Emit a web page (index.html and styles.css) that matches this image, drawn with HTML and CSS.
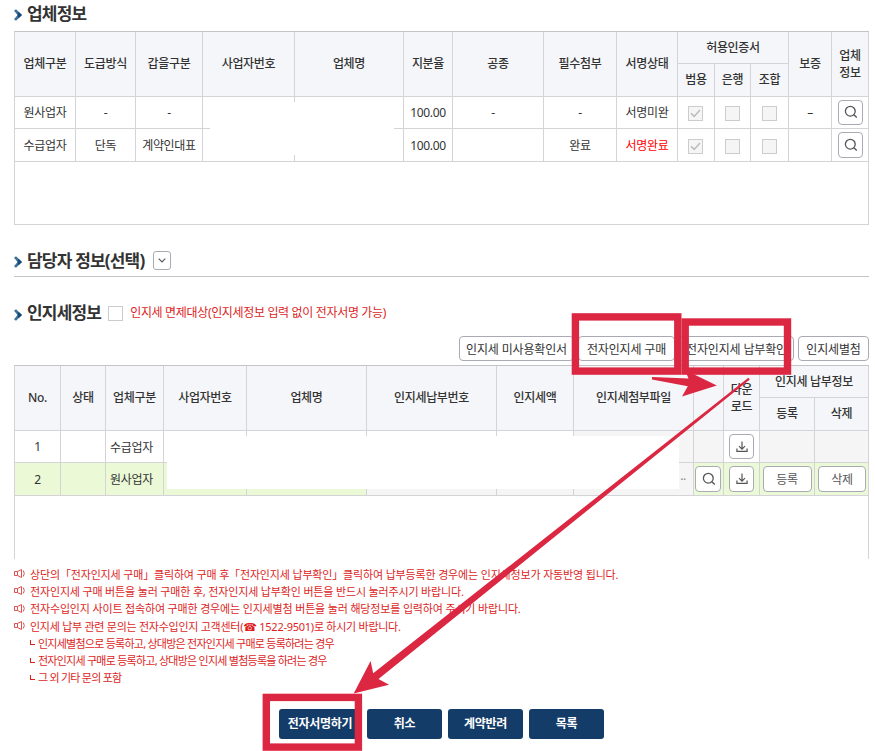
FILE: index.html
```html
<!DOCTYPE html>
<html lang="ko">
<head>
    <meta charset="UTF-8">
    <meta name="viewport" content="width=device-width, initial-scale=1.0">
    <title>전자계약 서명</title>
    <link rel="stylesheet" href="styles.css">
</head>
<body>
    <!-- 공통 아이콘 -->
    <svg class="sprite">
        <symbol id="arrow" viewBox="0 0 8 12">
            <path d="M0 1.8 L2 .3 L8 6 L2 11.7 L0 10.2 L3.6 6 Z" fill="#3d7199"/>
            <path d="M4.5 2.8 L8 6 L4.5 9.2 L3.6 6 Z" fill="#174a78"/>
        </symbol>
        <symbol id="search" viewBox="0 0 14 14">
            <circle cx="6.3" cy="6.2" r="4.9" fill="none" stroke="#555" stroke-width="1.3"/>
            <path d="M9.8 9.8 L12.8 12.6" fill="none" stroke="#555" stroke-width="1.4"/>
        </symbol>
        <symbol id="download" viewBox="0 0 12 12">
            <path d="M6 .5 V8 M3 5.2 L6 8.2 L9 5.2 M.9 7.6 V10.4 H11.1 V7.6" fill="none" stroke="#555" stroke-width="1.2"/>
        </symbol>
        <symbol id="check" viewBox="0 0 11 9">
            <path d="M1 4.2 L4.2 7.4 L10 1" fill="none" stroke="#bbb" stroke-width="1.5"/>
        </symbol>
        <symbol id="speaker" viewBox="0 0 12 9">
            <path d="M.5 2.5 H3.5 V6.5 H.5 Z M3.5 2.5 L7.5 .5 V8.5 L3.5 6.5 M9.3 1.5 Q11.3 4.5 9.3 7.5" fill="none" stroke="#e05050" stroke-width="1"/>
        </symbol>
    </svg>

    <div class="page">
        <h2 class="title title-company"><svg class="bullet"><use href="#arrow"/></svg>업체정보</h2>
        <div class="grid-box company">
            <table>
                <colgroup>
                    <col class="w61"><col class="w60"><col class="w67"><col class="w92"><col class="w109"><col class="w49"><col class="w91">
                    <col class="w73"><col class="w61"><col class="w37"><col class="w36"><col class="w38"><col class="w43"><col class="w37">
                </colgroup>
                <thead>
                    <tr class="odd">
                        <th rowspan="2">업체구분</th>
                        <th rowspan="2">도급방식</th>
                        <th rowspan="2">갑을구분</th>
                        <th rowspan="2">사업자번호</th>
                        <th rowspan="2">업체명</th>
                        <th rowspan="2">지분율</th>
                        <th rowspan="2">공종</th>
                        <th rowspan="2">필수첨부</th>
                        <th rowspan="2">서명상태</th>
                        <th colspan="3" class="low">허용인증서</th>
                        <th rowspan="2">보증</th>
                        <th rowspan="2" class="low">업체<br>정보</th>
                    </tr>
                    <tr class="even">
                        <th>범용</th>
                        <th>은행</th>
                        <th>조합</th>
                    </tr>
                </thead>
                <tbody>
                    <tr class="odd">
                        <td>원사업자</td>
                        <td>-</td>
                        <td>-</td>
                        <td></td>
                        <td></td>
                        <td>100.00</td>
                        <td class="work">-</td>
                        <td>-</td>
                        <td>서명미완</td>
                        <td><span class="check checked"><svg><use href="#check"/></svg></span></td>
                        <td><span class="check"></span></td>
                        <td><span class="check"></span></td>
                        <td>–</td>
                        <td><button class="icon-btn"><svg class="ico-search"><use href="#search"/></svg></button></td>
                    </tr>
                    <tr class="even">
                        <td>수급업자</td>
                        <td>단독</td>
                        <td>계약인대표</td>
                        <td></td>
                        <td></td>
                        <td>100.00</td>
                        <td></td>
                        <td>완료</td>
                        <td class="done">서명완료</td>
                        <td><span class="check checked"><svg><use href="#check"/></svg></span></td>
                        <td><span class="check"></span></td>
                        <td><span class="check"></span></td>
                        <td></td>
                        <td><button class="icon-btn tall"><svg class="ico-search"><use href="#search"/></svg></button></td>
                    </tr>
                </tbody>
            </table>
            <div class="mask"></div>
        </div>

        <h2 class="title title-manager"><svg class="bullet"><use href="#arrow"/></svg>담당자 정보(선택)
            <button class="toggle"><svg viewBox="0 0 8 5"><path d="M.7 .7 L4 4 L7.3 .7" fill="none" stroke="#555" stroke-width="1.1"/></svg></button>
        </h2>

        <div class="stamp-head">
            <h2 class="title"><svg class="bullet"><use href="#arrow"/></svg>인지세정보</h2>
            <span class="check empty"></span>
            <span class="exempt">인지세 면제대상(인지세정보 입력 없이 전자서명 가능)</span>
        </div>

        <div class="toolbar">
            <button class="btn b1">인지세 미사용확인서</button>
            <button class="btn b2">전자인지세 구매</button>
            <button class="btn b3">전자인지세 납부확인</button>
            <button class="btn b4">인지세별첨</button>
        </div>

        <div class="grid-box stamp">
            <table>
                <colgroup>
                    <col class="w46"><col class="w45"><col class="w58"><col class="w83"><col class="w120"><col class="w130">
                    <col class="w77"><col class="w120"><col class="w30"><col class="w36"><col class="w55"><col class="w54">
                </colgroup>
                <thead>
                    <tr class="odd">
                        <th rowspan="2">No.</th>
                        <th rowspan="2">상태</th>
                        <th rowspan="2">업체구분</th>
                        <th rowspan="2">사업자번호</th>
                        <th rowspan="2">업체명</th>
                        <th rowspan="2">인지세납부번호</th>
                        <th rowspan="2">인지세액</th>
                        <th rowspan="2">인지세첨부파일</th>
                        <th rowspan="2"></th>
                        <th rowspan="2" class="low">다운<br>로드</th>
                        <th colspan="2" class="low">인지세 납부정보</th>
                    </tr>
                    <tr class="even">
                        <th>등록</th>
                        <th>삭제</th>
                    </tr>
                </thead>
                <tbody>
                    <tr class="odd">
                        <td>1</td>
                        <td></td>
                        <td class="left">수급업자</td>
                        <td></td>
                        <td></td>
                        <td></td>
                        <td></td>
                        <td class="off"></td>
                        <td class="off"></td>
                        <td><button class="icon-btn"><svg class="ico-down"><use href="#download"/></svg></button></td>
                        <td class="off"></td>
                        <td class="off"></td>
                    </tr>
                    <tr class="even selected">
                        <td>2</td>
                        <td></td>
                        <td class="left">원사업자</td>
                        <td></td>
                        <td></td>
                        <td class="off"></td>
                        <td class="off"></td>
                        <td class="off more">··</td>
                        <td><button class="icon-btn tall wide"><svg class="ico-search"><use href="#search"/></svg></button></td>
                        <td><button class="icon-btn tall"><svg class="ico-down"><use href="#download"/></svg></button></td>
                        <td><button class="cell-btn">등록</button></td>
                        <td><button class="cell-btn del">삭제</button></td>
                    </tr>
                </tbody>
            </table>
            <div class="mask"></div>
        </div>

        <ul class="notes">
            <li><svg class="speaker"><use href="#speaker"/></svg><span>상단의「전자인지세 구매」클릭하여 구매 후「전자인지세 납부확인」클릭하여 납부등록한 경우에는 인지세정보가 자동반영 됩니다.</span></li>
            <li><svg class="speaker"><use href="#speaker"/></svg><span>전자인지세 구매 버튼을 눌러 구매한 후, 전자인지세 납부확인 버튼을 반드시 눌러주시기 바랍니다.</span></li>
            <li><svg class="speaker"><use href="#speaker"/></svg><span>전자수입인지 사이트 접속하여 구매한 경우에는 인지세별첨 버튼을 눌러 해당정보를 입력하여 주시기 바랍니다.</span></li>
            <li class="contact"><svg class="speaker"><use href="#speaker"/></svg><span>인지세 납부 관련 문의는 전자수입인지 고객센터(<b class="tel">☎</b> 1522-9501)로 하시기 바랍니다.</span></li>
            <li class="sub"><i class="corner"></i>인지세별첨으로 등록하고, 상대방은 전자인지세 구매로 등록하려는 경우</li>
            <li class="sub"><i class="corner"></i>전자인지세 구매로 등록하고, 상대방은 인지세 별첨등록을 하려는 경우</li>
            <li class="sub"><i class="corner"></i>그 외 기타 문의 포함</li>
        </ul>

        <div class="actions">
            <button class="sign">전자서명하기</button>
            <button>취소</button>
            <button>계약반려</button>
            <button>목록</button>
        </div>

        <!-- 순서 안내 표시 -->
        <svg class="guide" viewBox="0 0 875 751">
            <g fill="none" stroke="#dc2742" stroke-width="7.4">
                <rect x="575.4" y="316.9" width="102.4" height="54.2"/>
                <rect x="685.2" y="322" width="102.3" height="49.1"/>
                <rect x="266.3" y="697.4" width="92.1" height="49.7"/>
            </g>
            <g fill="#dc2742">
                <path d="M652 377 L688.5 378.5 L685 370 L716.8 385.4 L682 396.4 L687.8 386.2 L652 379.6 Z"/>
                <path d="M748.4 377.8 L749.8 379.4 L378.5 679 L389 684.7 L353.7 693.6 L370.6 661 L373.2 673.3 Z"/>
            </g>
        </svg>
    </div>
</body>
</html>
```
FILE: styles.css
```css
* {
    box-sizing: border-box;
}

body {
    margin: 0;
    background: #fff;
    color: #333;
    font-family: "Noto Sans", "Noto Sans CJK KR", sans-serif;
    font-size: 12px;
    letter-spacing: -0.3px;
}

button {
    margin: 0;
    padding: 0;
    font-family: inherit;
    font-size: 12px;
    letter-spacing: inherit;
    color: #333;
    background: #fff;
    cursor: pointer;
}

.sprite {
    display: none;
}

.page {
    position: relative;
    height: 751px;
    padding: 0 6px 0 14px;
    overflow: hidden;
}

/* titles */
.title {
    display: flex;
    align-items: center;
    margin: 0;
    font-size: 17px;
    font-weight: 700;
    letter-spacing: -0.8px;
    line-height: 26px;
}

.bullet {
    width: 8px;
    height: 12px;
    margin: 3px 5px 0 0;
}

.title-company {
    height: 31px;
    padding-bottom: 4px;
}

.title-manager {
    height: 52px;
    padding-top: 20px;
    border-bottom: 1px solid #c4c4c8;
}

.title-manager .bullet {
    margin-top: 2px;
}

.toggle {
    display: flex;
    align-items: center;
    justify-content: center;
    width: 18px;
    height: 19px;
    margin: 0 0 1px 9px;
    border: 1px solid #aaaab4;
    border-radius: 3px;
}

.toggle svg {
    width: 8px;
    height: 5px;
}

/* tables */
.grid-box {
    position: relative;
    width: 855px;
    border: 1px solid #d3d3d8;
    border-top-color: #c4c4c8;
    border-right: 0;
}

.grid-box::after {
    content: "";
    position: absolute;
    top: 0;
    right: 0;
    bottom: 0;
    width: 1px;
    background: #d3d3d8;
}

.company {
    height: 194px;
}

.stamp {
    height: 194px;
    border-bottom: 0;
}

table {
    width: 854px;
    table-layout: fixed;
    border-collapse: separate;
    border-spacing: 0;
}

th, td {
    padding: 0;
    border-right: 1px solid #d3d3d8;
    border-bottom: 1px solid #d3d3d8;
    text-align: center;
    font-weight: normal;
    line-height: 17px;
    white-space: nowrap;
}

th {
    padding-bottom: 2px;
    background: #f5f6f9;
    font-weight: 500;
}

th.low {
    padding-bottom: 0;
}

.odd {
    height: 32px;
}

.even {
    height: 33px;
}

.w30 { width: 30px; }
.w36 { width: 36px; }
.w37 { width: 37px; }
.w38 { width: 38px; }
.w43 { width: 43px; }
.w45 { width: 45px; }
.w46 { width: 46px; }
.w49 { width: 49px; }
.w54 { width: 54px; }
.w55 { width: 55px; }
.w58 { width: 58px; }
.w60 { width: 60px; }
.w61 { width: 61px; }
.w67 { width: 67px; }
.w73 { width: 73px; }
.w77 { width: 77px; }
.w83 { width: 83px; }
.w91 { width: 91px; }
.w92 { width: 92px; }
.w109 { width: 109px; }
.w120 { width: 120px; }
.w130 { width: 130px; }

.left {
    padding-left: 4px;
    text-align: left;
}

.stamp .odd .left {
    padding-top: 1px;
}

.work {
    padding-right: 10px;
}

.done {
    color: #f00;
}

.selected td {
    background: #ebf9d7;
}

td.off, .selected td.off {
    background: #f5f5f5;
}

.more {
    padding-right: 7px;
    text-align: right;
    color: #888;
}

.check {
    display: flex;
    align-items: center;
    justify-content: center;
    width: 15px;
    height: 15px;
    margin: 2px auto 0;
    border: 1px solid #ccc;
    background: #f5f5f5;
}

.check.checked {
    margin-left: 10px;
}

.check svg {
    width: 11px;
    height: 9px;
}

.icon-btn {
    display: flex;
    align-items: center;
    justify-content: center;
    width: 25px;
    height: 25px;
    margin: 0 auto;
    border: 1px solid #aaaab4;
    border-radius: 4px;
}

.icon-btn.tall {
    height: 26px;
}

.icon-btn.wide {
    width: 26px;
    margin-left: 1px;
}

.ico-search {
    width: 14px;
    height: 14px;
    margin: 0 0 1px 1px;
}

.ico-down {
    width: 12px;
    height: 12px;
}

.cell-btn {
    display: block;
    width: 49px;
    height: 26px;
    margin: 0 auto;
    padding-bottom: 1px;
    border: 1px solid #aaaab4;
    border-radius: 4px;
    color: #555;
}

.cell-btn.del {
    width: 48px;
    margin-left: 3px;
}

/* covers the private columns */
.mask {
    position: absolute;
    background: #fff;
}

.company .mask {
    left: 195px;
    top: 70px;
    width: 184px;
    height: 53px;
}

.stamp .mask {
    left: 152px;
    top: 70px;
    width: 512px;
    height: 53px;
}

/* stamp tax */
.stamp-head {
    display: flex;
    align-items: center;
    height: 59px;
    padding-top: 13px;
}

.check.empty {
    margin: 0 7px 0 7px;
    background: #fff;
}

.exempt {
    padding-bottom: 3px;
    color: #dc1e1e;
    letter-spacing: -0.34px;
}

.toolbar {
    display: flex;
    justify-content: flex-end;
    gap: 4px;
    height: 29px;
}

.btn {
    height: 25px;
    border: 1px solid #aaaab4;
    border-radius: 4px;
    letter-spacing: -0.15px;
    white-space: nowrap;
}

.b1 { width: 115px; }
.b2 { width: 97px; }
.b3 { width: 115px; }
.b4 { width: 71px; }

/* notes */
.notes {
    margin: 0;
    padding: 6px 0 0;
    list-style: none;
    color: #dc1e1e;
    font-size: 11px;
    letter-spacing: -0.16px;
}

.notes li {
    display: flex;
    align-items: center;
    height: 17.3px;
    white-space: nowrap;
}

.notes .contact {
    letter-spacing: -0.26px;
}

.speaker {
    width: 12px;
    height: 9px;
    margin-right: 4px;
}

.notes .sub {
    padding-left: 16px;
    letter-spacing: -0.75px;
}

.corner {
    width: 5px;
    height: 5px;
    margin-right: 3px;
    border-left: 1px solid #dc1e1e;
    border-bottom: 1px solid #dc1e1e;
}

.tel {
    font-family: "DejaVu Sans", sans-serif;
    font-size: 11px;
}

/* bottom buttons */
.actions {
    display: flex;
    justify-content: center;
    gap: 6px;
    padding-top: 23px;
}

.actions button {
    width: 75px;
    height: 30px;
    padding-bottom: 2px;
    border: 0;
    border-radius: 3px;
    background: #143c69;
    color: #fff;
    font-weight: 700;
}

.actions .sign {
    width: 82px;
}

.guide {
    position: absolute;
    left: 0;
    top: 0;
    width: 875px;
    height: 751px;
    pointer-events: none;
}
```
